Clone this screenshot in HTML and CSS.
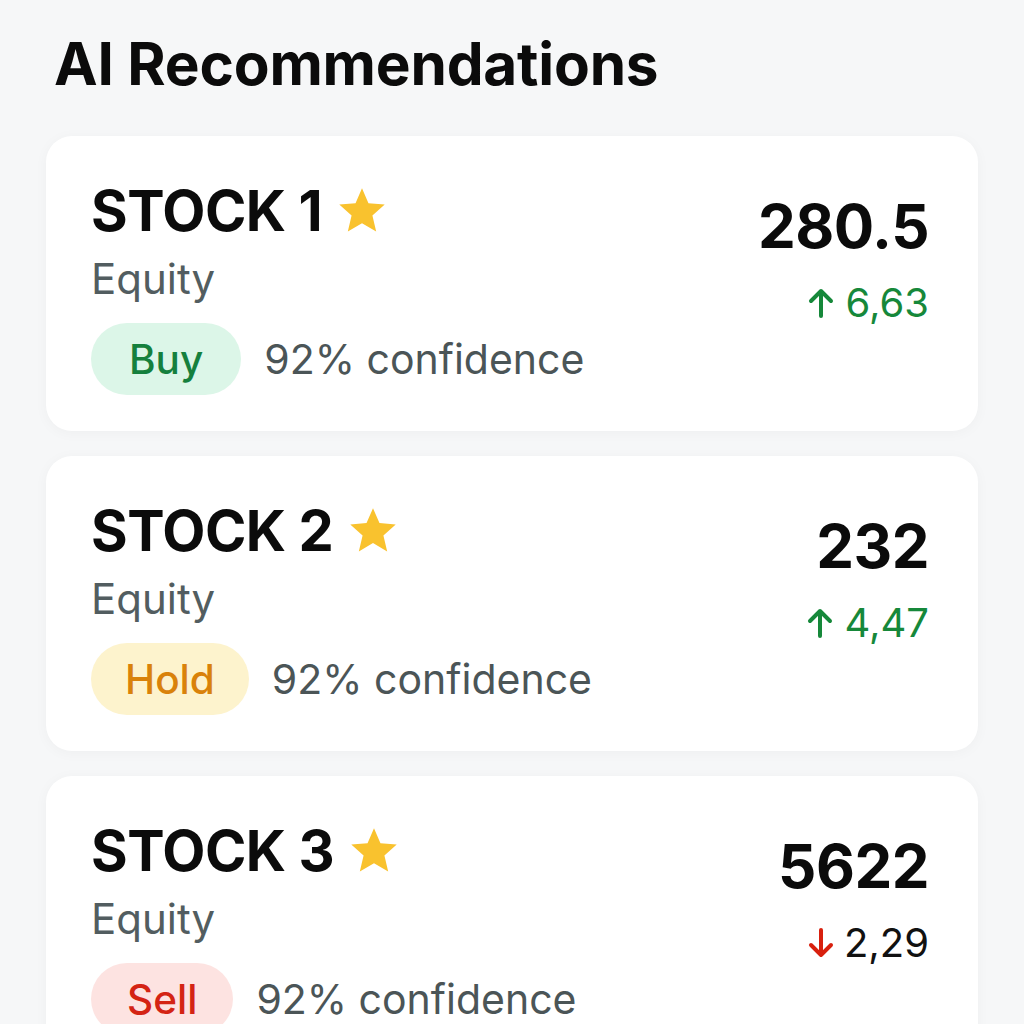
FILE: index.html
```html
<!DOCTYPE html>
<html>
<head>
<meta charset="utf-8">
<link rel="stylesheet" href="styles.css">
</head>
<body>
<div class="page">
  <h1 class="title">AI Recommendations</h1>
  <div class="list">
    <div class="card">
      <div class="left">
        <div class="name">STOCK 1 <svg class="star" viewBox="0 0 24 24"><path d="M12 1.5l3.1 7.2 7.8.7-5.9 5.2 1.8 7.7L12 18.3l-6.8 4 1.8-7.7L1.1 9.4l7.8-.7z"/></svg></div>
        <div class="type">Equity</div>
        <div class="rec">
          <span class="badge buy">Buy</span>
          <span class="conf">92% confidence</span>
        </div>
      </div>
      <div class="right">
        <div class="price">280.5</div>
        <div class="change up"><svg class="arrow" viewBox="0 0 26 30"><path d="M13 28V3M3 13L13 3l10 10"/></svg><span>6,63</span></div>
      </div>
    </div>
    <div class="card">
      <div class="left">
        <div class="name">STOCK 2 <svg class="star" viewBox="0 0 24 24"><path d="M12 1.5l3.1 7.2 7.8.7-5.9 5.2 1.8 7.7L12 18.3l-6.8 4 1.8-7.7L1.1 9.4l7.8-.7z"/></svg></div>
        <div class="type">Equity</div>
        <div class="rec">
          <span class="badge hold">Hold</span>
          <span class="conf">92% confidence</span>
        </div>
      </div>
      <div class="right">
        <div class="price">232</div>
        <div class="change up"><svg class="arrow" viewBox="0 0 26 30"><path d="M13 28V3M3 13L13 3l10 10"/></svg><span>4,47</span></div>
      </div>
    </div>
    <div class="card">
      <div class="left">
        <div class="name">STOCK 3 <svg class="star" viewBox="0 0 24 24"><path d="M12 1.5l3.1 7.2 7.8.7-5.9 5.2 1.8 7.7L12 18.3l-6.8 4 1.8-7.7L1.1 9.4l7.8-.7z"/></svg></div>
        <div class="type">Equity</div>
        <div class="rec">
          <span class="badge sell">Sell</span>
          <span class="conf">92% confidence</span>
        </div>
      </div>
      <div class="right">
        <div class="price">5622</div>
        <div class="change down"><svg class="arrow" viewBox="0 0 26 30"><path d="M13 2v25M3 17l10 10 10-10"/></svg><span>2,29</span></div>
      </div>
    </div>
  </div>
</div>
</body>
</html>
```

FILE: styles.css
```css
html, body {
  margin: 0;
  padding: 0;
  background: #f6f7f8;
  font-family: Inter, "Noto Sans", "Liberation Sans", sans-serif;
  color: #0b0b0b;
}

.page {
  padding: 29px 46px 0 46px;
}

.title {
  margin: 0 0 37px 8px;
  font-size: 58.5px;
  line-height: 70px;
  font-weight: 700;
  letter-spacing: -0.2px;
}

.list {
  display: flex;
  flex-direction: column;
  gap: 25px;
}

.card {
  background: #ffffff;
  border-radius: 26px;
  box-shadow: 0 2px 14px rgba(0, 0, 0, 0.035);
  padding: 42px 49px 36px 45px;
  display: flex;
  justify-content: space-between;
  align-items: flex-start;
}

.left {
  display: flex;
  flex-direction: column;
}

.name {
  display: flex;
  align-items: center;
  font-size: 56px;
  line-height: 67px;
  font-weight: 700;
  letter-spacing: -0.5px;
}

.star {
  width: 50px;
  height: 50px;
  margin-left: 15px;
  margin-top: -4px;
  fill: #f9c22e;
}

.type {
  margin-top: 9px;
  font-size: 42px;
  line-height: 50px;
  color: #525d60;
}

.rec {
  margin-top: 19px;
  display: flex;
  align-items: center;
  gap: 23px;
}

.badge {
  height: 72px;
  padding: 0 36px;
  border-radius: 36px;
  display: flex;
  align-items: center;
  font-size: 40.5px;
  font-weight: 500;
}

.badge.buy {
  background: #dcf6e8;
  color: #15803d;
  padding: 0 38px;
}

.badge.hold {
  background: #fdf3cd;
  color: #d9820a;
  padding: 0 34px;
}

.badge.sell {
  background: #fde3e1;
  color: #d42414;
}

.conf {
  font-size: 41px;
  color: #4b5557;
}

.right {
  padding-top: 12px;
  display: flex;
  flex-direction: column;
  align-items: flex-end;
}

.price {
  font-size: 60px;
  line-height: 72px;
  font-weight: 700;
  letter-spacing: -0.5px;
}

.change {
  margin-top: 17px;
  display: flex;
  align-items: center;
  gap: 12px;
  font-size: 40px;
  line-height: 48px;
}

.arrow {
  width: 26px;
  height: 30px;
  fill: none;
  stroke-width: 4;
  stroke-linecap: round;
  stroke-linejoin: round;
}

.change.up {
  color: #16883a;
}

.change.up .arrow {
  stroke: #16883a;
}

.change.down {
  color: #111111;
  gap: 10px;
}

.change.down .arrow {
  stroke: #d8200e;
}
```
